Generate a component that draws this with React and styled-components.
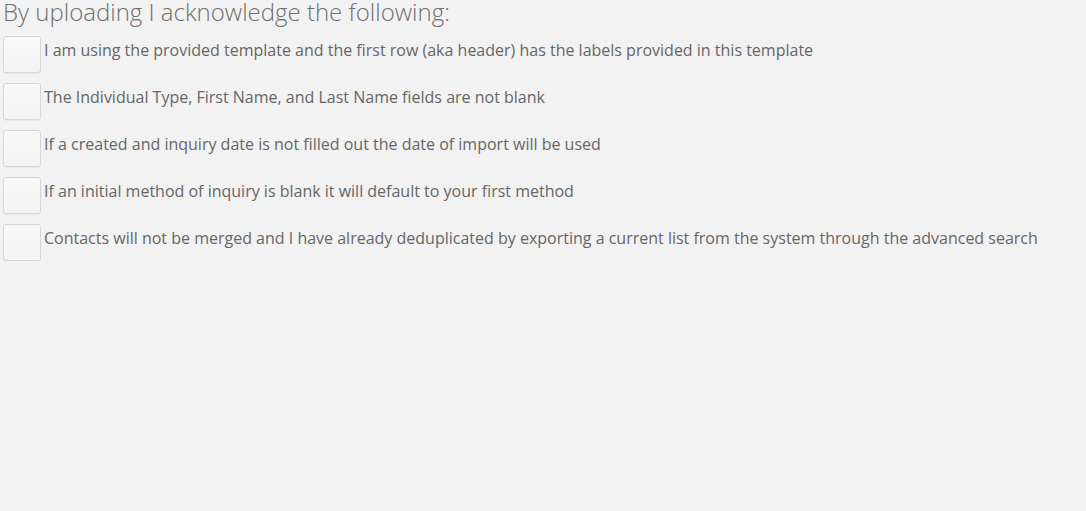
import React from "react";
import styled, { createGlobalStyle } from "styled-components";

const Global = createGlobalStyle`
  html, body { margin: 0; padding: 0; background: #f2f2f2; }
  body { font-family: "Open Sans", "Liberation Sans", sans-serif; }
`;

const Page = styled.div`
  padding: 0 0 0 3px;
`;

const Heading = styled.h2`
  margin: 0 0 13px 0;
  font-size: 24px;
  line-height: 23px;
  font-weight: 300;
  color: #707070;
`;

const List = styled.div`
  display: flex;
  flex-direction: column;
  gap: 10px;
`;

const Row = styled.label`
  display: flex;
  align-items: center;
  gap: 3px;
  height: 37px;
`;

const Box = styled.span`
  box-sizing: border-box;
  width: 38px;
  height: 37px;
  border: 1px solid #d6d6d6;
  border-radius: 3px;
  background: linear-gradient(#f9f9f9, #f3f3f3);
  box-shadow: 0 1px 1px rgba(0, 0, 0, 0.04);
  flex: none;
`;

const Text = styled.span`
  font-size: 16px;
  color: #666;
  margin-top: -9px;
`;

const items = [
  "I am using the provided template and the first row (aka header) has the labels provided in this template",
  "The Individual Type, First Name, and Last Name fields are not blank",
  "If a created and inquiry date is not filled out the date of import will be used",
  "If an initial method of inquiry is blank it will default to your first method",
  "Contacts will not be merged and I have already deduplicated by exporting a current list from the system through the advanced search",
];

export default function App() {
  return (
    <Page>
      <Global />
      <Heading>By uploading I acknowledge the following:</Heading>
      <List>
        {items.map((t) => (
          <Row key={t}>
            <Box />
            <Text>{t}</Text>
          </Row>
        ))}
      </List>
    </Page>
  );
}
